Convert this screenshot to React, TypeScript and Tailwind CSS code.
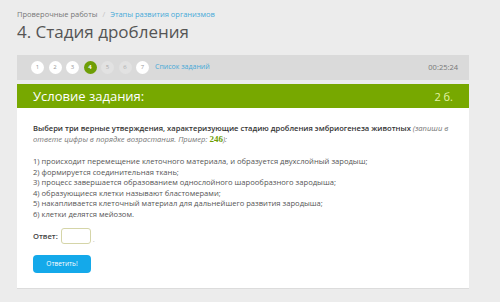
import React from "react";

export default function App() {
  const pages = [
    { n: 1, s: "white" },
    { n: 2, s: "white" },
    { n: 3, s: "white" },
    { n: 4, s: "active" },
    { n: 5, s: "grey" },
    { n: 6, s: "grey" },
    { n: 7, s: "white" },
  ];
  return (
    <div
      className="w-[500px] h-[302px] bg-[#ececec] overflow-hidden"
      style={{ fontFamily: '"Open Sans", "Noto Sans", sans-serif' }}
    >
      <div className="pl-[17px] pr-[31px] pt-[8px]">
        <div className="flex items-center text-[7.5px] leading-[12px] h-[12px]">
          <span className="text-[#777]">Проверочные работы</span>
          <span className="text-[#c4c4c4] mx-[5px]">/</span>
          <span className="text-[#45a9d8]">Этапы развития организмов</span>
        </div>
        <div className="text-[17px] leading-[22px] text-[#555] mt-[1px]">4. Стадия дробления</div>

        <div className="mt-[12px] h-[25px] bg-[#dadada] flex items-center pl-[14px] pr-[11px]">
          <div className="flex items-center gap-[4.5px]">
            {pages.map((p) => (
              <div
                key={p.n}
                className={
                  p.s === "active"
                    ? "w-[13px] h-[13px] rounded-full bg-[#6e9e06] text-white flex items-center justify-center text-[6px] font-bold"
                    : p.s === "grey"
                    ? "w-[13px] h-[13px] rounded-full bg-[#e2e2e2] text-[#aaa] flex items-center justify-center text-[6px]"
                    : "w-[13px] h-[13px] rounded-full bg-white text-[#999] flex items-center justify-center text-[6px]"
                }
              >
                {p.n}
              </div>
            ))}
          </div>
          <span className="ml-[6px] text-[7px] text-[#45a9d8]">Список заданий</span>
          <span className="ml-auto text-[7.5px] text-[#777]">00:25:24</span>
        </div>

        <div className="mt-[4px] h-[24px] bg-[#77a800] flex items-center pl-[16px] pr-[16px]">
          <span className="text-white text-[13px] leading-none">Условие задания:</span>
          <span className="ml-auto text-[#e4f5a8] text-[11px] leading-none">2 б.</span>
        </div>

        <div className="bg-white h-[180px] px-[16px] pt-[15px] shadow-[0_1px_0_#dcdcdc] text-[7.6px] leading-[10.5px] text-[#444]">
          <p>
            <span className="font-semibold text-[#333]">Выбери три верные утверждения, характеризующие стадию дробления эмбриогенеза животных</span>{" "}
            <i className="text-[#777]">(запиши в ответе цифры в порядке возрастания. Пример: </i>
            <b className="text-[#6e9e06]" style={{ fontFamily: '"Liberation Serif", serif', fontSize: "9px" }}>246</b>
            <i className="text-[#777]">):</i>
          </p>
          <div className="mt-[12px] text-[#555]">
            <div>1) происходит перемещение клеточного материала, и образуется двухслойный зародыш;</div>
            <div>2) формируется соединительная ткань;</div>
            <div>3) процесс завершается образованием однослойного шарообразного зародыша;</div>
            <div>4) образующиеся клетки называют бластомерами;</div>
            <div>5) накапливается клеточный материал для дальнейшего развития зародыша;</div>
            <div>6) клетки делятся мейозом.</div>
          </div>
          <div className="mt-[9px] flex items-center">
            <span className="font-semibold text-[#444] text-[7.6px]">Ответ:</span>
            <div className="ml-[3px] w-[30px] h-[16px] border border-[#d5d5a8] rounded-[3px] bg-white" />
            <span className="ml-[2px] text-[#bbb] self-end leading-none">.</span>
          </div>
          <div className="mt-[11px] w-[58px] h-[18px] rounded-[4px] bg-[#14a9ea] text-white text-[6.5px] flex items-center justify-center">
            Ответить!
          </div>
        </div>
      </div>
    </div>
  );
}
